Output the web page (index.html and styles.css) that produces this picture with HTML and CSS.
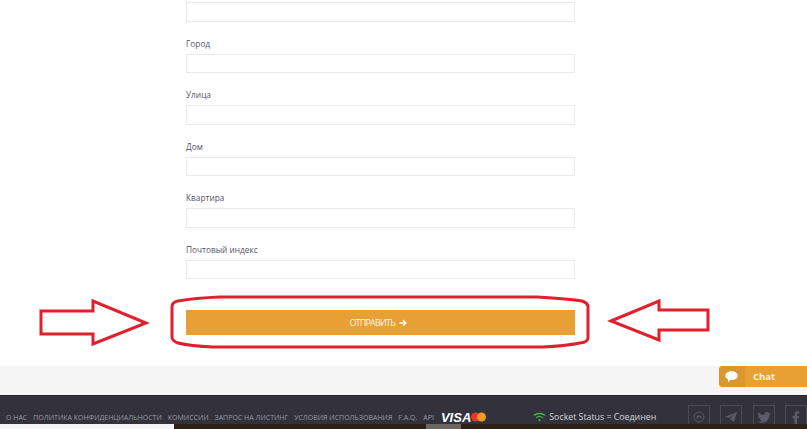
FILE: index.html
```html
<!DOCTYPE html>
<html lang="ru">
<head>
    <meta charset="UTF-8">
    <title>Адрес</title>
    <link rel="stylesheet" href="styles.css">
</head>
<body class="page">
    <div class="formArea">
        <div class="addressForm">
            <input class="fieldInput firstInput" type="text">
            <label class="fieldLabel">Город</label>
            <input class="fieldInput" type="text">
            <label class="fieldLabel">Улица</label>
            <input class="fieldInput" type="text">
            <label class="fieldLabel">Дом</label>
            <input class="fieldInput" type="text">
            <label class="fieldLabel">Квартира</label>
            <input class="fieldInput" type="text">
            <label class="fieldLabel">Почтовый индекс</label>
            <input class="fieldInput" type="text">
            <button class="sendButton">ОТПРАВИТЬ
                <svg class="sendArrow" width="8" height="8" viewBox="0 0 9 9"><path d="M0.5 4.5H7.5M4.5 1.2L7.8 4.5L4.5 7.8" fill="none" stroke="#fff" stroke-width="1.5"/></svg>
            </button>
        </div>
    </div>
    <div class="greyBand"></div>
    <div class="footerBar">
        <nav class="footerLinks">
            <a>О НАС</a>
            <a>ПОЛИТИКА КОНФИДЕНЦИАЛЬНОСТИ</a>
            <a>КОМИССИИ</a>
            <a>ЗАПРОС НА ЛИСТИНГ</a>
            <a>УСЛОВИЯ ИСПОЛЬЗОВАНИЯ</a>
            <a>F.A.Q.</a>
            <a>API</a>
        </nav>
        <span class="visaText">VISA</span>
        <svg class="masterCard" width="15" height="10" viewBox="0 0 15 10"><circle cx="4.500" cy="5" r="4.500" fill="#e8382a"/><circle cx="10.500" cy="5" r="4.500" fill="#f59a23"/></svg>
        <div class="socketStatus">
            <svg class="wifiIcon" width="13" height="10" viewBox="0 0 14 10"><path d="M1 3.500C4.500 0.500 9.500 0.500 13 3.500M3.200 5.800C5.500 4 8.500 4 10.800 5.800" fill="none" stroke="#4caf50" stroke-width="1.400"/><circle cx="7" cy="8.300" r="1.200" fill="#4caf50"/></svg>
            <span>Socket Status = Соединен</span>
        </div>
        <div class="socialIcons">
            <div class="socialBox"><svg width="12" height="12" viewBox="0 0 12 12"><circle cx="6" cy="6" r="5" fill="none" stroke="#5d5b6a"/><path d="M3.500 7.500L5 4.500L6.200 6.500L7.500 4.500L8.500 7.500" fill="none" stroke="#5d5b6a"/></svg></div>
            <div class="socialBox"><svg width="14" height="12" viewBox="0 0 14 12"><path d="M13 1L1 5.800L4.600 7L10 3.200L6 7.800L9.800 11Z" fill="#5d5b6a"/></svg></div>
            <div class="socialBox"><svg width="14" height="12" viewBox="0 0 14 12"><path d="M13.500 2.200C13 2.400 12.500 2.600 12 2.600C12.500 2.300 13 1.700 13.200 1.100C12.700 1.400 12.100 1.600 11.500 1.800C10.200 0.300 7.400 1.300 7.400 3.400V4C5 3.900 3 2.900 1.500 1.200C0.700 2.600 1.200 4.200 2.300 5C1.900 5 1.500 4.900 1.100 4.700C1.100 6.200 2.100 7.300 3.500 7.600C3.100 7.700 2.700 7.700 2.300 7.600C2.700 8.800 3.800 9.600 5 9.700C3.800 10.600 2.200 11 0.700 10.800C5.800 13.500 12.500 10.500 12.400 3.600C12.800 3.300 13.200 2.800 13.500 2.200Z" fill="#5d5b6a"/></svg></div>
            <div class="socialBox"><svg width="8" height="13" viewBox="0 0 8 13"><path d="M2.500 13V7.300H0.500V5H2.500V3.300C2.500 1.200 3.700 0.200 5.500 0.200H7.300V2.400H6C5.200 2.400 5 2.800 5 3.500V5H7.200L6.900 7.300H5V13Z" fill="#5d5b6a"/></svg></div>
        </div>
    </div>
    <div class="bottomStrip">
        <div class="stripLight"></div>
        <div class="stripDark"></div>
        <div class="stripGrey"></div>
        <div class="stripDark stripRest"></div>
    </div>
    <div class="chatTab">
        <div class="chatIconPart">
            <svg width="13" height="12" viewBox="0 0 13 12"><path d="M6.500 0.300C10 0.300 12.700 2.200 12.700 4.700C12.700 7.200 10 9 6.500 9C6 9 5.600 9 5.200 8.900L3 11.500L3 8.300C1.300 7.500 0.300 6.200 0.300 4.700C0.300 2.200 3 0.300 6.500 0.300Z" fill="#fff"/></svg>
        </div>
        <span class="chatText">Chat</span>
    </div>
    <svg class="markup" width="807" height="429" viewBox="0 0 807 429">
        <g fill="none" stroke="#e0202c" stroke-width="3">
            <path d="M41 311H93V301L146 323L93 344V334H41Z"/>
            <path d="M611 321L659 301V310H708V330H659V340Z"/>
            <path d="M172 307Q172 302 178 301Q195 298 220 297H537Q570 299 582 301Q588 303 588 307V338Q588 342 580 343Q565 346 543 347H213Q190 346 178 343Q172 341 172 337Z"/>
        </g>
    </svg>
</body>
</html>
```

FILE: styles.css
```css
.page{
    margin: 0;
    height: 429px;
    overflow: hidden;
    background-color: #ffffff;
    font-family: 'Open Sans', sans-serif;
}

.formArea{
    height: 366px;
    box-sizing: border-box;
    padding-left: 186px;
}

.addressForm{
    display: flex;
    flex-direction: column;
    width: 388.5px;
}

.fieldInput{
    box-sizing: border-box;
    height: 19.5px;
    padding: 0;
    background: #ffffff;
    border: 1px solid #ebebeb;
}

.firstInput{
    margin-top: 2px;
}

.fieldLabel{
    height: 13px;
    margin-top: 15px;
    margin-bottom: 4px;
    font-size: 8.3px;
    line-height: 13px;
    color: #555566;
}

.sendButton{
    display: flex;
    justify-content: center;
    align-items: center;
    gap: 4px;
    height: 25px;
    margin-top: 31px;
    padding: 0 4px 0 0;
    border: none;
    background-color: #e8a035;
    color: #fff4e0;
    font-family: 'Open Sans', sans-serif;
    font-size: 9px;
    letter-spacing: -0.8px;
}

.greyBand{
    box-sizing: border-box;
    height: 30px;
    background-color: #f5f5f5;
    border-bottom: 1px solid #25242c;
}

.footerBar{
    display: flex;
    align-items: center;
    box-sizing: border-box;
    height: 28px;
    padding: 14px 0 0 6px;
    overflow: hidden;
    background-color: #32313c;
    color: #9a99a3;
}

.footerLinks{
    display: flex;
    gap: 6px;
    flex-shrink: 0;
    font-size: 7px;
    white-space: nowrap;
}

.visaText{
    flex-shrink: 0;
    margin-left: 7px;
    font-family: 'Liberation Sans', sans-serif;
    font-size: 13px;
    font-style: italic;
    font-weight: bold;
    color: #ffffff;
}

.masterCard{
    flex-shrink: 0;
}

.socketStatus{
    display: flex;
    align-items: center;
    flex-shrink: 0;
    gap: 3px;
    margin-left: 47px;
    font-size: 8.8px;
    color: #d4d4d8;
    white-space: nowrap;
}

.wifiIcon{
    flex-shrink: 0;
}

.socialIcons{
    display: flex;
    flex-shrink: 0;
    gap: 10.5px;
    align-self: flex-start;
    margin-top: -5px;
    margin-left: auto;
}

.socialBox{
    display: flex;
    justify-content: center;
    align-items: center;
    box-sizing: border-box;
    width: 22px;
    height: 24px;
    border: 1px solid #4b4a56;
}

.bottomStrip{
    display: flex;
    height: 5px;
}

.stripLight{
    width: 174px;
    background-color: #f3f3f3;
}

.stripDark{
    width: 252px;
    background-color: #2b2118;
}

.stripGrey{
    width: 35px;
    background-color: #6b6662;
}

.stripRest{
    flex: 1;
}

.chatTab{
    position: absolute;
    left: 719px;
    top: 366px;
    display: flex;
    align-items: center;
    width: 88px;
    height: 21px;
    border-radius: 4px 0 0 4px;
    background-color: #e8a035;
}

.chatIconPart{
    display: flex;
    justify-content: center;
    align-items: center;
    box-sizing: border-box;
    width: 26px;
    height: 21px;
    padding-right: 2px;
    background-color: #dc962f;
    border-radius: 4px 0 0 4px;
}

.chatText{
    margin-left: 8px;
    font-size: 9.5px;
    font-weight: bold;
    color: #fff4e0;
}

.markup{
    position: absolute;
    left: 0;
    top: 0;
    pointer-events: none;
}
```
